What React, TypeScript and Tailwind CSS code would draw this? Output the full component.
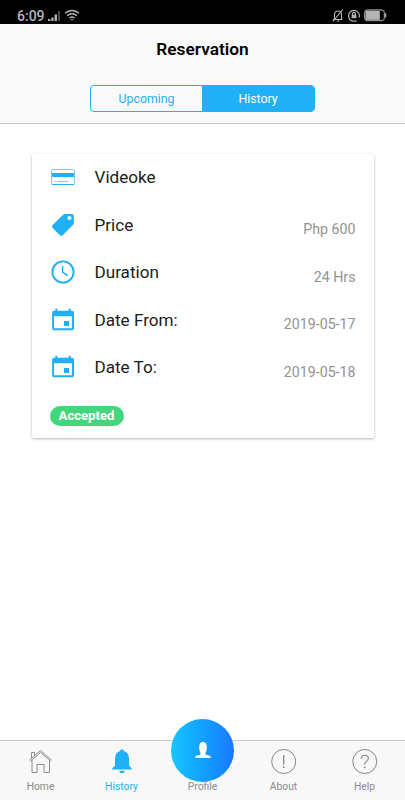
import React, { useState } from 'react';

const CardIcon = () => (
  <svg width="24" height="24" viewBox="0 0 24 24" fill="none">
    <rect x="0.5" y="4.5" width="23" height="15" rx="1" stroke="#7ccdf8" strokeWidth="1" />
    <path d="M1 8h22v4H1z" fill="#1fb0f6" />
    <path d="M3 16.5h1.600M6.300 16.5h10.700" stroke="#6cc8f8" strokeWidth="1" />
    <path d="M1 19.500h22" stroke="#1fb0f6" strokeWidth="1" />
  </svg>
);

const TagIcon = () => (
  <svg width="24" height="24" viewBox="0 0 24 24" fill="#1fb0f6">
    <path
      fillRule="evenodd"
      d="M20.400 1h-6.100c-.9 0-1.600.2-2.200.8L1.700 12.100c-.8.8-.8 2 0 2.800l7.200 7.300c.8.8 2 .8 2.800 0l10.400-10.400c.5-.5.8-1.200.8-2V3.400c0-1.400-1-2.400-2.500-2.400zM18.500 7a2 2 0 1 1 0-4 2 2 0 0 1 0 4z"
    />
  </svg>
);

const ClockIcon = () => (
  <svg width="24" height="24" viewBox="0 0 24 24" fill="none" stroke="#1fb0f6">
    <circle cx="12" cy="12" r="10.600" strokeWidth="1.900" />
    <path d="M11.600 6v6.300l5.200 3.200" strokeWidth="1.500" />
  </svg>
);

const CalendarIcon = () => (
  <svg width="24" height="24" viewBox="0 0 24 24" fill="#1fb0f6">
    <path
      fillRule="evenodd"
      d="M4.300.7h2v2.100h11.400V.7h2v2.100h1.200c1.200 0 2.100.9 2.100 2v15.400c0 1.200-.9 2.100-2.100 2.100H3.200c-1.200 0-2.100-.9-2.100-2.100V4.800c0-1.100.9-2 2.100-2h1.100zM3.100 8.200v12h17.800v-12z"
    />
    <path d="M13 13h5v5h-5z" />
  </svg>
);

const HomeIcon = () => (
  <svg width="26" height="26" viewBox="0 0 26 26" fill="none" stroke="#8c8c8c" strokeWidth="1">
    <path d="M1.500 12.200 12.500 2.500l11 9.700M2.400 13.200 12.500 4.400l10.100 8.800M3.500 10.300V4.500h3v3.200" />
    <path d="M4 12v12.500h5v-8h7v8h5.500V12" />
  </svg>
);

const BellIcon = () => (
  <svg width="26" height="26" viewBox="0 0 26 26" fill="#1fb0f6">
    <path d="M13 25c1.500 0 2.600-.8 2.800-2.300h-5.600c.2 1.500 1.300 2.300 2.800 2.300zM20 17.500v-6.600c0-4-1.700-6.900-5.200-7.800-.1-1.200-.7-1.900-1.800-1.900s-1.700.7-1.800 1.900C7.700 4 6 6.900 6 10.900v6.600L3.300 20.300v1.200h19.400v-1.200z" />
  </svg>
);

const AboutIcon = () => (
  <svg width="26" height="26" viewBox="0 0 26 26" fill="none" stroke="#868686">
    <circle cx="12.700" cy="13.500" r="12" strokeWidth="1" />
    <path d="M12.700 7v9.500" strokeWidth="1.300" />
    <circle cx="12.700" cy="19.200" r="0.9" fill="#868686" stroke="none" />
  </svg>
);

const HelpIcon = () => (
  <svg width="26" height="26" viewBox="0 0 26 26" fill="none" stroke="#868686">
    <circle cx="12.700" cy="13.500" r="12" strokeWidth="1" />
    <path d="M9.200 10.700c0-2.200 1.400-3.500 3.500-3.500s3.700 1.200 3.700 3.100c0 1.400-.8 2.100-1.900 2.900-1.300.9-1.700 1.500-1.700 2.700v.8" strokeWidth="1.100" />
    <circle cx="12.800" cy="19.400" r="0.9" fill="#868686" stroke="none" />
  </svg>
);

const PersonIcon = () => (
  <svg className="mb-px" width="16" height="16" viewBox="0 0 16 16" fill="#fff">
    <path d="M15.700 16c-.1-1.700-.7-2.300-2.700-2.700-1.500-.3-2.200-.6-2.400-1.100-.3-.6-.1-1.600.2-2.100.7-1 1-2.600 1-4.600C11.800 1.700 10.600 0 8 0S4.200 1.700 4.200 5.500c0 2 .3 3.600 1 4.600.3.500.5 1.500.2 2.100-.2.500-.9.800-2.400 1.100-2 .4-2.600 1-2.700 2.700z" />
  </svg>
);

const StatusBar = () => (
  <div className="flex h-[24px] shrink-0 items-start justify-between bg-black pl-[17px] pr-[18px] pt-[7px] text-[#b4b4b4]">
    <div className="flex items-center">
      <span className="w-[28px] text-[14px] font-medium leading-[18px]">6:09</span>
      <svg className="ml-[3px]" width="13" height="12" viewBox="0 0 13 12" fill="#b4b4b4">
        <path d="M0 9h2.300v2H0zM3.300 7.500h2.300V11H3.300zM6.600 4.500H9V11H6.600z" />
        <path d="M10 1h2v10h-2z" fill="#484848" />
      </svg>
      <svg className="ml-[3px] -mt-[2px]" width="16" height="12" viewBox="0 0 16 12" fill="none" stroke="#b4b4b4" strokeWidth="1.500">
        <path d="M1 4.200c4.200-3.700 9.800-3.700 14 0M3.200 6.700c3-2.500 6.600-2.500 9.600 0M5.500 9.100c1.600-1.300 3.400-1.300 5 0" />
        <path d="m6.500 10.300 1.500 1.500 1.500-1.500z" fill="#b4b4b4" stroke="none" />
      </svg>
    </div>
    <div className="flex items-center gap-[4px] pt-[2px]">
      <svg width="12" height="13" viewBox="0 0 12 13" fill="none" stroke="#b4b4b4" strokeWidth="1.100">
        <path d="M1 10.500h9.500M2.500 10V5.500C2.500 3.200 4 2 6 2s3.500 1.200 3.500 3.500V10M5 12h2.500M11 .5.800 12.300" />
      </svg>
      <svg width="12" height="13" viewBox="0 0 12 13" fill="none" stroke="#b4b4b4" strokeWidth="1.200">
        <path d="M8.500 11.600A5.400 5.400 0 1 1 11.100 8.500" />
        <path d="M4.600 6V4.800a1.400 1.400 0 0 1 2.800 0V6" />
        <path d="M3.600 5.800h4.800v3.400H3.600z" fill="#b4b4b4" stroke="none" />
      </svg>
      <svg width="23" height="13" viewBox="0 0 23 13" fill="none" stroke="#b4b4b4">
        <rect x="0.700" y="0.900" width="19.600" height="10.800" rx="2.500" strokeWidth="1" />
        <path d="M1.500 1.700h14.300v9.200H1.500z" fill="#b4b4b4" stroke="none" />
        <path d="M21.600 4.300v4" strokeWidth="1.300" />
      </svg>
    </div>
  </div>
);

interface RowProps {
  icon: React.ReactNode;
  label: string;
  value?: string;
}

const Row = ({ icon, label, value }: RowProps) => (
  <div className="flex h-[47.5px] items-center pl-[19px] pr-[18px]">
    {icon}
    <span className="ml-[20px] flex-1 text-[17.1px] leading-6 text-[#1c1c1c]">{label}</span>
    {value && <span className="mt-[9px] text-[14.2px] leading-5 text-[#929292]">{value}</span>}
  </div>
);

interface TabProps {
  icon: React.ReactNode;
  label: string;
  active?: boolean;
}

const Tab = ({ icon, label, active }: TabProps) => (
  <button className="flex flex-1 flex-col items-center pt-[7px]">
    {icon}
    <span className={`mt-[6px] text-[10.3px] leading-[14px] ${active ? 'text-[#1fb0f6]' : 'text-[#8c8c8c]'}`}>
      {label}
    </span>
  </button>
);

export default function App() {
  const [segment, setSegment] = useState('History');

  return (
    <div className="flex h-screen w-full flex-col overflow-hidden bg-white font-['Roboto',sans-serif]">
      <StatusBar />

      <header className="flex h-[100px] shrink-0 flex-col items-center border-b border-[#cbcbcb] bg-[#f9f9f9]">
        <h1 className="mt-[13px] text-[17.3px] font-semibold leading-6 text-black">Reservation</h1>
        <div className="mt-[24px] flex h-[27px] w-[225px] overflow-hidden rounded-[4px] border border-[#1fb0f6]">
          {['Upcoming', 'History'].map((name) => (
            <button
              key={name}
              onClick={() => setSegment(name)}
              className={`text-[12.3px] leading-[24px] ${name === 'Upcoming' ? 'w-[111px]' : 'flex-1'} ${
                segment === name ? 'bg-[#1fb0f6] text-white' : 'text-[#1fb0f6]'
              }`}
            >
              {name}
            </button>
          ))}
        </div>
      </header>

      <main className="flex-1">
        <div className="ml-[31.5px] mt-[29.5px] h-[284px] w-[342px] rounded-[2px] bg-white shadow-[0_1px_3px_rgba(0,0,0,0.3)]">
          <Row icon={<CardIcon />} label="Videoke" />
          <Row icon={<TagIcon />} label="Price" value="Php 600" />
          <Row icon={<ClockIcon />} label="Duration" value="24 Hrs" />
          <Row icon={<CalendarIcon />} label="Date From:" value="2019-05-17" />
          <Row icon={<CalendarIcon />} label="Date To:" value="2019-05-18" />
          <span className="ml-[18px] mt-[14.5px] flex h-[20px] w-[74px] items-center justify-center rounded-full bg-[#42d77d] text-[13.1px] font-bold leading-[18px] text-white">
            Accepted
          </span>
        </div>
      </main>

      <nav className="relative flex h-[60px] shrink-0 border-t border-[#cbcbcb] bg-[#f8f8f8]">
        <Tab icon={<HomeIcon />} label="Home" />
        <Tab icon={<BellIcon />} label="History" active />
        <div className="flex flex-1 flex-col items-center pt-[39px]">
          <span className="relative z-10 text-[10.3px] leading-[14px] text-[#8c8c8c]">Profile</span>
        </div>
        <Tab icon={<AboutIcon />} label="About" />
        <Tab icon={<HelpIcon />} label="Help" />
        <button className="absolute left-[171px] -top-[22px] flex size-[63px] items-center justify-center rounded-full bg-linear-to-r from-[#1bc6ff] to-[#1b78ff]">
          <PersonIcon />
        </button>
      </nav>
    </div>
  );
}
